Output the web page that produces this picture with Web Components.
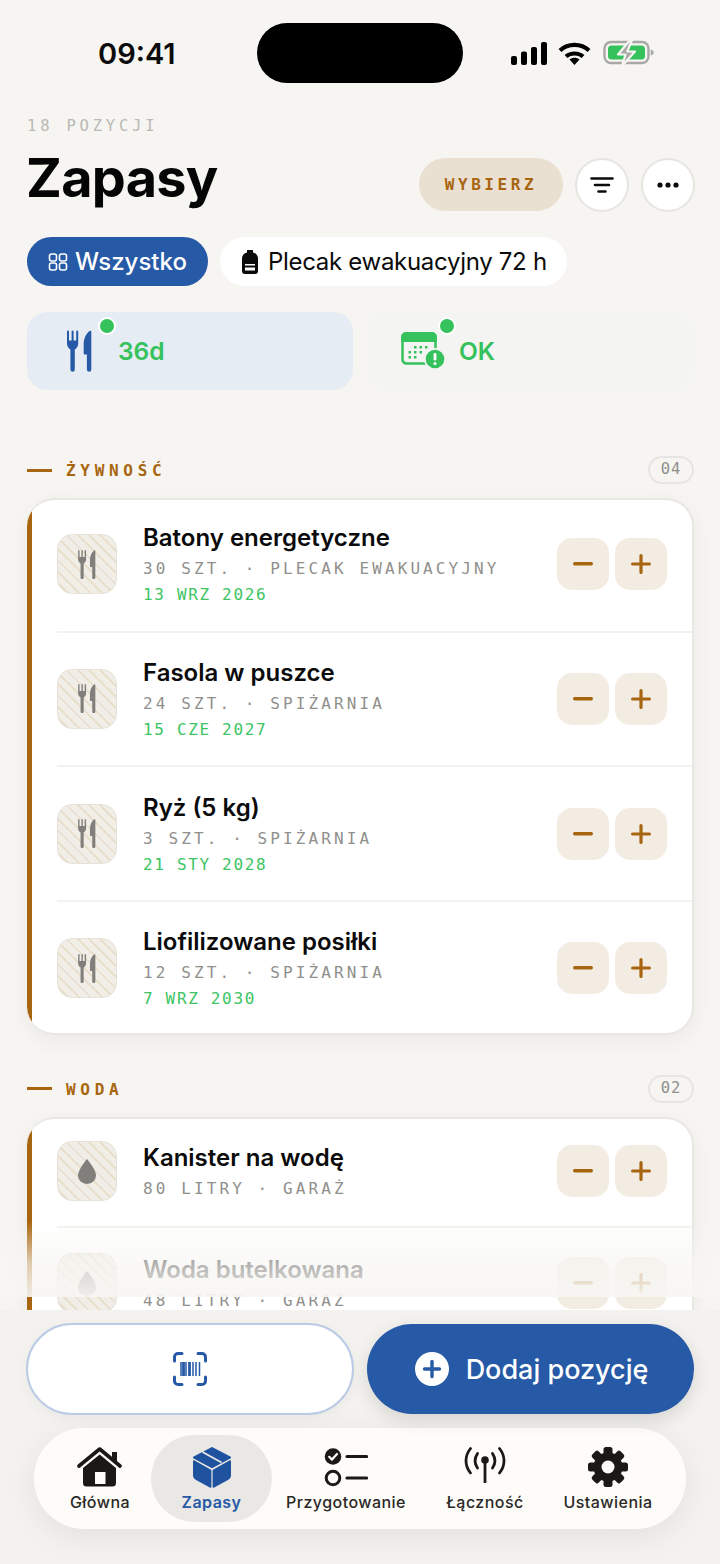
<!DOCTYPE html>
<html lang="pl">
<head>
<meta charset="utf-8">
<title>Zapasy</title>
<style>
  html, body { margin: 0; padding: 0; background: #f6f5f1; }
  body { font-family: Inter, "Noto Sans", sans-serif; }
</style>
</head>
<body>
<app-screen>
  <status-bar></status-bar>
  <stock-header eyebrow="18 POZYCJI" heading="Zapasy"></stock-header>
  <chip-row>
    <filter-chip active icon="grid">Wszystko</filter-chip>
    <filter-chip icon="pack">Plecak ewakuacyjny 72 h</filter-chip>
  </chip-row>
  <stat-row>
    <stat-tile active icon="cutlery">36d</stat-tile>
    <stat-tile icon="calendar">OK</stat-tile>
  </stat-row>

  <stock-section label="ŻYWNOŚĆ" count="04" style="margin-top:66px">
    <stock-item icon="food" name="Batony energetyczne" meta="30 SZT. · PLECAK EWAKUACYJNY" date="13 WRZ 2026"></stock-item>
    <stock-item icon="food" name="Fasola w puszce" meta="24 SZT. · SPIŻARNIA" date="15 CZE 2027"></stock-item>
    <stock-item icon="food" name="Ryż (5 kg)" meta="3 SZT. · SPIŻARNIA" date="21 STY 2028"></stock-item>
    <stock-item icon="food" name="Liofilizowane posiłki" meta="12 SZT. · SPIŻARNIA" date="7 WRZ 2030"></stock-item>
  </stock-section>

  <stock-section label="WODA" count="02" style="margin-top:40px">
    <stock-item icon="water" name="Kanister na wodę" meta="80 LITRY · GARAŻ"></stock-item>
    <stock-item icon="water" name="Woda butelkowana" meta="48 LITRY · GARAŻ"></stock-item>
  </stock-section>

  <action-dock slot="dock">
    <tab-bar>
      <tab-item width="102" label="Główna" icon="home"></tab-item>
      <tab-item width="121" label="Zapasy" icon="box" active></tab-item>
      <tab-item width="148" label="Przygotowanie" icon="check"></tab-item>
      <tab-item width="130" label="Łączność" icon="antenna"></tab-item>
      <tab-item width="116" label="Ustawienia" icon="gear"></tab-item>
    </tab-bar>
  </action-dock>
</app-screen>

<script>
const MONO = '"DejaVu Sans Mono", "Liberation Mono", monospace';
const BLUE = "#2659a6";
const BROWN = "#a8650f";
const GREEN = "#35c25c";

const CUTLERY = `M0 1a1 1 0 0 1 2 0V10H4.6V1a1 1 0 0 1 2 0V10H9.2V1a1 1 0 0 1 2 0V13C11.2 16 9.5 18 7.8 19V39a2.2 2.2 0 0 1-4.4 0V19C1.7 18 0 16 0 13Z
  M23 .3C23.8 0 24.3 .5 24.3 1.2V39a2.2 2.2 0 0 1-4.4 0V24H17.5a.8 .8 0 0 1-.8-.8V14C16.7 8 19 3 23 .3Z`;
const DROP = "M9 0C9 0 18 10.5 18 16.5A9 8.5 0 0 1 0 16.5C0 10.5 9 0 9 0Z";

const ICONS = {
  grid: `<svg width="20" height="18" viewBox="0 0 20 18" fill="none" stroke="#fff" stroke-width="1.6">
    <rect x="1.5" y="1" width="7" height="7" rx="2"/><rect x="11.5" y="1" width="7" height="7" rx="2"/>
    <rect x="1.5" y="10" width="7" height="7" rx="2"/><rect x="11.5" y="10" width="7" height="7" rx="2"/></svg>`,
  pack: `<svg width="16" height="24" viewBox="0 0 16 24">
    <path fill="#0b0b0b" d="M5 0h6v2.5c3 .8 5 3 5 6V21a3 3 0 0 1-3 3H3a3 3 0 0 1-3-3V8.5c0-3 2-5.2 5-6Z"/>
    <rect x="3" y="14" width="10" height="1.5" fill="#fff"/><rect x="3" y="17.5" width="10" height="3" fill="#fff"/></svg>`,
  cutlery: `<svg width="25" height="42" viewBox="0 0 25 41" style="margin-left:40px"><path fill="${BLUE}" d="${CUTLERY}"/></svg>`,
  calendar: `<svg width="46" height="38" viewBox="0 0 46 38" style="margin-left:35px">
    <rect x="1.5" y="1.5" width="33" height="30" rx="4" fill="none" stroke="${GREEN}" stroke-width="2.5"/>
    <path fill="${GREEN}" d="M5 0h26a5 5 0 0 1 5 5v5H0V5a5 5 0 0 1 5-5Z"/>
    <g fill="${GREEN}">
      <rect x="13" y="14" width="2.5" height="2.5"/><rect x="18.5" y="14" width="2.5" height="2.5"/><rect x="24" y="14" width="2.5" height="2.5"/>
      <rect x="7.5" y="19" width="2.5" height="2.5"/><rect x="13" y="19" width="2.5" height="2.5"/><rect x="18.5" y="19" width="2.5" height="2.5"/>
      <rect x="7.5" y="24" width="2.5" height="2.5"/><rect x="13" y="24" width="2.5" height="2.5"/>
    </g>
    <circle cx="34" cy="27" r="11" fill="#f4f4f2"/><circle cx="34" cy="27" r="9.3" fill="${GREEN}"/>
    <rect x="32.6" y="21" width="2.8" height="7.5" rx="1.2" fill="#fff"/><circle cx="34" cy="31.5" r="1.6" fill="#fff"/></svg>`,
  home: `<svg width="46" height="41" viewBox="0 0 46 41">
    <path fill="none" stroke="#1a1916" stroke-width="3.6" stroke-linecap="round" stroke-linejoin="round" d="M2 19 22.7 2 43 19"/>
    <rect x="35" y="5" width="5" height="9" fill="#1a1916"/>
    <path fill="#1a1916" fill-rule="evenodd" d="M22.7 7.5 39 21V36a3.5 3.5 0 0 1-3.5 3.5H9.5A3.5 3.5 0 0 1 6 36V21ZM18 25v12h10.5V25Z"/></svg>`,
  box: `<svg width="38" height="41" viewBox="0 0 38 41">
    <g fill="#1f53a0" stroke="#1f53a0" stroke-linejoin="round">
      <path stroke-width="2.4" d="M19 1.2 36.8 10.5 19 20 1.2 10.5Z"/>
      <path stroke-width="1.6" d="M.8 14 17.6 23.5V40L3 32A3.5 3.5 0 0 1 .8 29Z"/>
      <path stroke-width="1.6" d="M37.2 14 20.4 23.5V40L35 32A3.5 3.5 0 0 0 37.2 29Z"/>
    </g>
    <path d="M9.5 5 28.5 15.5" stroke="#e9e8e5" stroke-width="1.8"/></svg>`,
  check: `<svg width="44" height="40" viewBox="0 0 44 40">
    <circle cx="9" cy="9.5" r="8.3" fill="#1a1916"/>
    <path d="M5.2 9.8 8 12.6l5-5.6" fill="none" stroke="#fdfcf8" stroke-width="2.2" stroke-linecap="round" stroke-linejoin="round"/>
    <circle cx="9" cy="31" r="6.8" fill="none" stroke="#1a1916" stroke-width="3"/>
    <path d="M23 9.5h19.5M23 31h19.5" stroke="#1a1916" stroke-width="3.2" stroke-linecap="round"/></svg>`,
  antenna: `<svg width="42" height="36" viewBox="0 0 42 36" fill="none" stroke="#1a1916" stroke-width="2.8" stroke-linecap="round">
    <path d="M21 13V35"/><circle cx="21" cy="13" r="2.4" fill="#1a1916"/>
    <path d="M13.5 6.5C10.5 11 10.5 16.5 13.5 21M28.5 6.5C31.5 11 31.5 16.5 28.5 21"/>
    <path d="M6.5 1.5C.5 9 .5 18.5 6.5 26M35.5 1.5C41.5 9 41.5 18.5 35.5 26"/></svg>`,
  gear: `<svg width="40" height="40" viewBox="0 0 40 40">
    <g fill="#1a1916">
      <circle cx="20" cy="20" r="14.5"/>
      ${[0, 45, 90, 135, 180, 225, 270, 315].map((a) => `<rect x="15.5" y="0" width="9" height="10" rx="2.5" transform="rotate(${a} 20 20)"/>`).join("")}
    </g>
    <circle cx="20" cy="20" r="6.5" fill="#fdfcf8"/></svg>`
};

class AppScreen extends HTMLElement {
  constructor() {
    super();
    this.shadow = this.attachShadow({ mode: "open" });
    this.shadow.innerHTML = `
      <style>
        :host { display: flex; flex-direction: column; width: 720px; height: 1564px; overflow: hidden; background: #f6f5f1; color: #0b0b0b; }
        .content { position: relative; height: 1310px; flex: none; overflow: hidden; }
        .fade { position: absolute; left: 0; right: 0; bottom: 13px; height: 76px; background: linear-gradient(rgba(247,246,243,0), rgba(247,246,243,.7) 55%, rgba(247,246,243,.93)); }
      </style>
      <div class="content"><slot></slot><div class="fade"></div></div>
      <slot name="dock"></slot>`;
  }
}

class StatusBar extends HTMLElement {
  constructor() {
    super();
    this.shadow = this.attachShadow({ mode: "open" });
    this.shadow.innerHTML = `
      <style>
        :host { display: block; height: 115px; box-sizing: border-box; padding-top: 23px; }
        .row { display: flex; align-items: center; height: 60px; }
        .time { width: 159px; padding-left: 98px; font: 600 29px/1 Inter, sans-serif; color: #0b0b0b; }
        .island { width: 206px; height: 60px; border-radius: 30px; background: #000; }
        .icons { display: flex; align-items: center; gap: 11px; margin-left: 48px; }
      </style>
      <div class="row">
        <div class="time">09:41</div>
        <div class="island"></div>
        <div class="icons">
          <svg width="36" height="23" viewBox="0 0 36 23" fill="#000">
            <rect x="0" y="14" width="6" height="9" rx="2"/><rect x="10" y="9.5" width="6" height="13.5" rx="2"/>
            <rect x="20" y="5" width="6" height="18" rx="2"/><rect x="30" y="0" width="6" height="23" rx="2"/>
          </svg>
          <svg width="33" height="23" viewBox="0 0 33 23" fill="none" stroke="#000" stroke-width="4.2">
            <path d="M2 8.5C10 1 23 1 31 8.5"/><path d="M8 14.5C12.5 10.5 20.5 10.5 25 14.5"/>
            <path fill="#000" stroke="none" d="M11.5 17.5C14.5 15.3 18.5 15.3 21.5 17.5L16.5 23Z"/>
          </svg>
          <svg width="51" height="26" viewBox="0 0 51 26" style="margin-left:1px">
            <rect x="1.5" y="2" width="44" height="21" rx="6.5" fill="none" stroke="#a8a8a6" stroke-width="2.4"/>
            <rect x="5" y="5.5" width="37" height="14" rx="3.5" fill="${GREEN}"/>
            <path d="M47.8 9.5c2 .5 2.8 1.8 2.8 3s-.8 2.5-2.8 3Z" fill="#a8a8a6"/>
            <path d="M27 0 15 14.5h7.5L19 26l13-14.5h-7.7L29 0Z" fill="#a8a8a6" stroke="#f6f5f1" stroke-width="2.2" stroke-linejoin="round"/>
          </svg>
        </div>
      </div>`;
  }
}

class StockHeader extends HTMLElement {
  constructor() {
    super();
    this.shadow = this.attachShadow({ mode: "open" });
    this.shadow.innerHTML = `
      <style>
        :host { display: block; padding: 0 25px 0 27px; }
        .eyebrow { height: 20px; font: 400 15.5px/23px ${MONO}; letter-spacing: 3.8px; color: #bab9b5; }
        .row { display: flex; align-items: flex-start; margin-top: 23px; height: 53px; }
        h1 { flex: 1; margin: 0 0 0 -1px; font: 700 54px/39px Inter, sans-serif; letter-spacing: -.7px; color: #050505; }
        .select { width: 144px; height: 53px; border-radius: 27px; background: #e9e0d2; display: flex; align-items: center; justify-content: center;
          font: 700 16px/1 ${MONO}; letter-spacing: 3.6px; color: ${BROWN}; }
        .round { width: 54px; height: 54px; box-sizing: border-box; margin-left: 12px; border: 2px solid #e6e5e2; border-radius: 50%; background: #fff; display: flex; align-items: center; justify-content: center; }
      </style>
      <div class="eyebrow">${this.getAttribute("eyebrow")}</div>
      <div class="row">
        <h1>${this.getAttribute("heading")}</h1>
        <div class="select">WYBIERZ</div>
        <div class="round">
          <svg width="24" height="18" viewBox="0 0 24 18" stroke="#0b0b0b" stroke-width="2.6" stroke-linecap="round"><path d="M1.5 2.5h21M5 9h14M8.5 15.5h7"/></svg>
        </div>
        <div class="round">
          <svg width="24" height="6" viewBox="0 0 24 6" fill="#0b0b0b"><circle cx="4" cy="3" r="2.6"/><circle cx="12" cy="3" r="2.6"/><circle cx="20" cy="3" r="2.6"/></svg>
        </div>
      </div>`;
  }
}

class ChipRow extends HTMLElement {
  constructor() {
    super();
    this.shadow = this.attachShadow({ mode: "open" });
    this.shadow.innerHTML = `
      <style>:host { display: flex; gap: 12px; margin-top: 26px; padding-left: 27px; }</style>
      <slot></slot>`;
  }
}

class FilterChip extends HTMLElement {
  constructor() {
    super();
    this.shadow = this.attachShadow({ mode: "open" });
    this.shadow.innerHTML = `
      <style>
        :host { display: flex; align-items: center; gap: 10px; height: 49px; padding: 0 20px 0 22px; border-radius: 25px; background: #fff; color: #0b0b0b; font: 400 24px/1 Inter, sans-serif; letter-spacing: -.3px; }
        :host([active]) { gap: 7px; padding: 0 21px; background: ${BLUE}; color: #fff; font-weight: 500; letter-spacing: 0; }
        svg { display: block; }
      </style>
      ${ICONS[this.getAttribute("icon")]}<slot></slot>`;
  }
}

class StatRow extends HTMLElement {
  constructor() {
    super();
    this.shadow = this.attachShadow({ mode: "open" });
    this.shadow.innerHTML = `
      <style>:host { display: flex; gap: 13px; margin-top: 26px; padding: 0 26px 0 27px; }</style>
      <slot></slot>`;
  }
}

class StatTile extends HTMLElement {
  constructor() {
    super();
    this.shadow = this.attachShadow({ mode: "open" });
    this.shadow.innerHTML = `
      <style>
        :host { position: relative; flex: 1; display: flex; align-items: center; height: 78px; border-radius: 20px; background: #f4f4f2; color: ${GREEN}; font: 600 24.5px/1 Inter, sans-serif; }
        :host([active]) { flex: none; width: 326px; background: #e6ecf4; }
        .ico { width: 93px; display: flex; align-items: center; }
        :host([active]) .ico { width: 91px; }
        .dot { position: absolute; left: 72px; top: 5px; width: 14px; height: 14px; border: 2px solid #fff; border-radius: 50%; background: ${GREEN}; }
        :host([active]) .dot { left: 71px; }
      </style>
      <div class="ico">${ICONS[this.getAttribute("icon")]}</div><slot></slot><div class="dot"></div>`;
  }
}

class StockSection extends HTMLElement {
  constructor() {
    super();
    this.shadow = this.attachShadow({ mode: "open" });
    this.shadow.innerHTML = `
      <style>
        :host { display: block; padding: 0 26px 0 27px; }
        .head { display: flex; align-items: center; height: 28px; margin-bottom: 14px; }
        .dash { width: 25px; height: 3px; background: ${BROWN}; margin-right: 14px; }
        .label { flex: 1; padding-top: 2px; font: 700 16px/1 ${MONO}; letter-spacing: 4.7px; color: ${BROWN}; }
        .count { box-sizing: border-box; width: 46px; height: 28px; border: 2px solid #e6e5e2; border-radius: 14px; display: flex; align-items: center; justify-content: center;
          font: 400 15.5px/1 ${MONO}; letter-spacing: 1px; color: #8f8f8c; }
        .card { padding-left: 5px; border: 2px solid #e8e7e3; border-left: 0; border-radius: 28px; box-shadow: 0 6px 22px rgba(0,0,0,.05);
          background: linear-gradient(${BROWN}, ${BROWN}) left / 5px 100% no-repeat, #fff; background-origin: border-box; }
      </style>
      <div class="head"><div class="dash"></div><div class="label">${this.getAttribute("label")}</div><div class="count">${this.getAttribute("count")}</div></div>
      <div class="card"><slot></slot></div>`;
  }
}

class StockItem extends HTMLElement {
  constructor() {
    super();
    this.shadow = this.attachShadow({ mode: "open" });
    const date = this.getAttribute("date");
    const glyph = this.getAttribute("icon") === "water"
      ? `<svg width="18" height="25" viewBox="0 0 18 25"><path fill="#807f7b" d="${DROP}"/></svg>`
      : `<svg width="18" height="29" viewBox="0 0 25 41"><path fill="#807f7b" d="${CUTLERY}"/></svg>`;
    this.shadow.innerHTML = `
      <style>
        :host { display: flex; align-items: center; margin-left: 25px; padding: 23.33px 25px 23.33px 0; border-bottom: 2px solid #f3f2ef; }
        :host(:first-child) { padding-top: 21.33px; }
        :host(:last-child) { padding-bottom: 21.33px; border-bottom: 0; }
        .thumb { flex: none; box-sizing: border-box; width: 60px; height: 60px; border: 1.5px solid #e6e2da; border-radius: 15px; display: flex; align-items: center; justify-content: center;
          background: repeating-linear-gradient(45deg, #f1eee7 0 6px, #eadfcd 6px 8px); }
        .text { flex: 1; min-height: 63px; margin-left: 26px; display: flex; flex-direction: column; justify-content: center; }
        .name { font: 600 24px/34px Inter, sans-serif; color: #0b0b0b; }
        .meta { font: 400 16px/27px ${MONO}; letter-spacing: 3.1px; color: #8f8f8c; white-space: nowrap; }
        .date { font: 400 16px/25px ${MONO}; letter-spacing: 1.67px; color: #3cc463; }
        .step { display: flex; gap: 6px; }
        .btn { width: 52px; height: 52px; border-radius: 15px; background: #f3ece3; display: flex; align-items: center; justify-content: center; }
      </style>
      <div class="thumb">${glyph}</div>
      <div class="text">
        <div class="name">${this.getAttribute("name")}</div>
        <div class="meta">${this.getAttribute("meta")}</div>
        ${date ? `<div class="date">${date}</div>` : ""}
      </div>
      <div class="step">
        <div class="btn"><svg width="20" height="4" viewBox="0 0 20 4"><rect width="20" height="3.4" rx="1.7" fill="${BROWN}"/></svg></div>
        <div class="btn"><svg width="20" height="20" viewBox="0 0 20 20" stroke="${BROWN}" stroke-width="3.2" stroke-linecap="round"><path d="M1.6 10h16.8M10 1.6v16.8"/></svg></div>
      </div>`;
  }
}

class ActionDock extends HTMLElement {
  constructor() {
    super();
    this.shadow = this.attachShadow({ mode: "open" });
    this.shadow.innerHTML = `
      <style>
        :host { display: block; flex: 1; background: #f3f2ee; }
        .actions { display: flex; gap: 13px; padding: 13px 26px 0; height: 92px; }
        .scan { flex: none; width: 328px; box-sizing: border-box; border: 2px solid #bccbe5; border-radius: 46px; background: #fff; display: flex; align-items: center; justify-content: center; box-shadow: 0 4px 14px rgba(0,0,0,.04); }
        .add { flex: none; box-sizing: border-box; width: 327px; padding-left: 2px; margin: 1px 0; border-radius: 45px; background: ${BLUE}; color: #fff; display: flex; align-items: center; justify-content: center; gap: 17px; font: 500 27px/1 Inter, sans-serif; box-shadow: 0 6px 18px rgba(0,0,0,.12); }
        .tabs { margin: 13px 34px 0; }
      </style>
      <div class="actions">
        <div class="scan">
          <svg width="34" height="34" viewBox="0 0 34 34" fill="none" stroke="${BLUE}" stroke-width="3" stroke-linecap="round" stroke-linejoin="round">
            <path d="M1.5 9V5a3.5 3.5 0 0 1 3.5-3.5h4M25 1.5h4A3.5 3.5 0 0 1 32.5 5v4M32.5 25v4a3.5 3.5 0 0 1-3.5 3.5h-4M9 32.5H5A3.5 3.5 0 0 1 1.5 29v-4"/>
            <path stroke-linecap="butt" stroke-width="1.5" d="M8 10v14M13 10v14M20 10v14M23 10v14M26.5 10v14"/>
            <path stroke-linecap="butt" stroke-width="2.8" d="M10.5 10v14M16.5 10v14"/>
          </svg>
        </div>
        <div class="add">
          <svg width="34" height="34" viewBox="0 0 34 34"><circle cx="17" cy="17" r="17" fill="#fff"/><path d="M9.5 17h15M17 9.5v15" stroke="${BLUE}" stroke-width="3.4" stroke-linecap="round"/></svg>
          Dodaj pozycję
        </div>
      </div>
      <div class="tabs"><slot></slot></div>`;
  }
}

class TabBar extends HTMLElement {
  constructor() {
    super();
    this.shadow = this.attachShadow({ mode: "open" });
    this.shadow.innerHTML = `
      <style>
        :host { display: flex; box-sizing: border-box; height: 101px; padding: 7px 0 7px 15px; border-radius: 50px; background: #fdfcf8; box-shadow: 0 8px 32px rgba(0,0,0,.07); }
      </style>
      <slot></slot>`;
  }
}

class TabItem extends HTMLElement {
  constructor() {
    super();
    this.shadow = this.attachShadow({ mode: "open" });
    this.shadow.innerHTML = `
      <style>
        :host { display: flex; flex-direction: column; align-items: center; flex: none; width: ${this.getAttribute("width")}px; border-radius: 44px; color: #2a2926; font: 500 16px/20px Inter, sans-serif; letter-spacing: .45px; }
        :host([active]) { background: #e9e8e5; color: ${BLUE}; font-weight: 600; }
        .ico { height: 42px; margin-top: 12px; display: flex; align-items: flex-start; justify-content: center; }
        .lbl { margin-top: 3px; white-space: nowrap; }
      </style>
      <div class="ico">${ICONS[this.getAttribute("icon")]}</div>
      <div class="lbl">${this.getAttribute("label")}</div>`;
  }
}

customElements.define("app-screen", AppScreen);
customElements.define("status-bar", StatusBar);
customElements.define("stock-header", StockHeader);
customElements.define("chip-row", ChipRow);
customElements.define("filter-chip", FilterChip);
customElements.define("stat-row", StatRow);
customElements.define("stat-tile", StatTile);
customElements.define("stock-section", StockSection);
customElements.define("stock-item", StockItem);
customElements.define("action-dock", ActionDock);
customElements.define("tab-bar", TabBar);
customElements.define("tab-item", TabItem);
</script>
</body>
</html>
